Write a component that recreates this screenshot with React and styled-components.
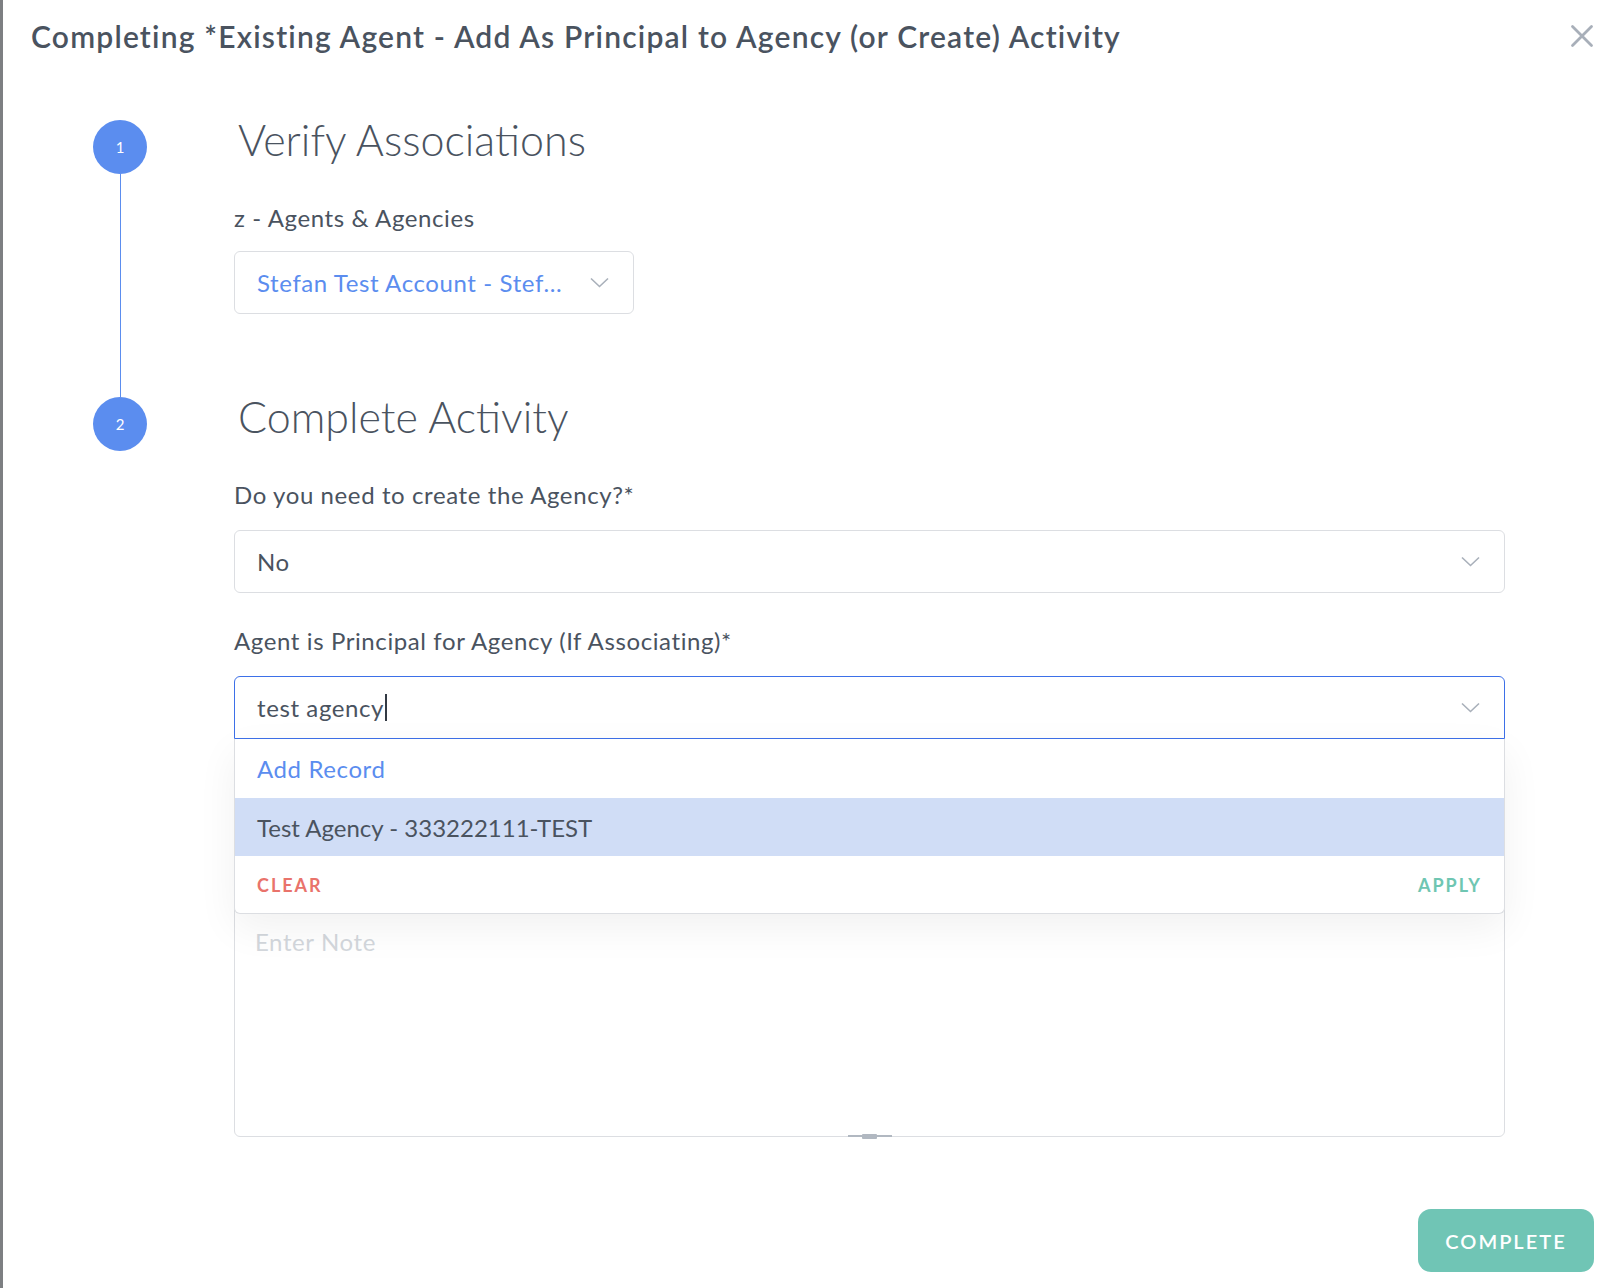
import React from 'react'
import styled, { createGlobalStyle } from 'styled-components';

const GlobalStyle = createGlobalStyle`
  html, body {
    margin: 0;
    padding: 0;
    background: #7d7f82;
  }
  #root {
    min-height: 100vh;
  }
  * {
    box-sizing: border-box;
  }
`;

const Modal = styled.div`
  margin-left: 3px;
  height: 100vh;
  background: #ffffff;
  display: flex;
  flex-direction: column;
  font-family: 'Lato', 'Open Sans', sans-serif;
  color: #4a535f;
`;

const Header = styled.div`
  display: flex;
  justify-content: space-between;
  align-items: center;
  padding: 16px 22px 0 28px;
`;

const Title = styled.h1`
  margin: 0;
  font-size: 30px;
  line-height: 40px;
  font-weight: 600;
  letter-spacing: 1.2px;
  color: #4a535f;
`;

const CloseButton = styled.button`
  border: none;
  background: none;
  padding: 0;
  width: 24px;
  height: 24px;
  display: flex;
  align-items: center;
  justify-content: center;
  cursor: pointer;
`;

const Steps = styled.div`
  margin-top: 64px;
  padding: 0 111px 0 90px;
`;

const Step = styled.div`
  display: grid;
  grid-template-columns: 54px 1fr;
  column-gap: 87px;
  min-height: ${p => p.$height || 'auto'};
`;

const Rail = styled.div`
  display: flex;
  flex-direction: column;
  align-items: center;
`;

const Circle = styled.div`
  width: 54px;
  height: 54px;
  flex-shrink: 0;
  border-radius: 50%;
  background: #5b8def;
  color: #ffffff;
  font-size: 15px;
  display: flex;
  align-items: center;
  justify-content: center;
`;

const RailLine = styled.div`
  flex: 1;
  width: 1px;
  background: #5b8def;
`;

const StepBody = styled.div`
  display: flex;
  flex-direction: column;
`;

const StepTitle = styled.h2`
  margin: -2px 0 2px 4px;
  font-size: 43px;
  line-height: 44px;
  font-weight: 300;
  color: #4a535f;
`;

const Field = styled.div`
  margin-top: ${p => p.$top || 34}px;
  display: flex;
  flex-direction: column;
  position: relative;
`;

const Label = styled.label`
  font-size: 24px;
  line-height: 28px;
  letter-spacing: 0.6px;
  color: #4a535f;
  margin-bottom: ${p => p.$gap || 21}px;
`;

const SelectBox = styled.div`
  width: ${p => p.$width || '100%'};
  height: 63px;
  border: 1px solid ${p => (p.$focused ? '#3d70e8' : '#dcdee2')};
  border-radius: ${p => (p.$focused ? '6px 6px 0 0' : '6px')};
  display: flex;
  align-items: center;
  justify-content: space-between;
  padding: 0 24px 0 22px;
  background: #ffffff;
`;

const SelectValue = styled.span`
  font-size: 24px;
  letter-spacing: 0.6px;
  color: ${p => (p.$link ? '#5b8def' : '#4a535f')};
  white-space: nowrap;
  display: flex;
  align-items: center;
`;

const Caret = styled.span`
  display: inline-block;
  width: 2px;
  height: 27px;
  margin-left: 1px;
  background: #333a44;
`;

const Menu = styled.div`
  position: absolute;
  left: 0;
  right: 0;
  top: 100%;
  z-index: 2;
  background: #ffffff;
  border: 1px solid #dcdee2;
  border-top: none;
  border-radius: 0 0 6px 6px;
  box-shadow: 0 14px 40px rgba(0, 0, 0, 0.06);
`;

const MenuItem = styled.div`
  height: ${p => p.$h}px;
  display: flex;
  align-items: center;
  padding: 0 22px;
  font-size: 24px;
  letter-spacing: ${p => (p.$active ? '0' : '0.6px')};
  color: ${p => (p.$link ? '#5b8def' : '#4a535f')};
  background: ${p => (p.$active ? '#d0ddf6' : 'transparent')};
`;

const MenuFooter = styled.div`
  height: 57px;
  display: flex;
  align-items: center;
  justify-content: space-between;
  padding: 0 22px;
`;

const TextButton = styled.button`
  border: none;
  background: none;
  padding: 0;
  font-family: 'Lato', sans-serif;
  font-size: 18px;
  font-weight: 700;
  letter-spacing: 2px;
  color: ${p => p.$color};
  cursor: pointer;
`;

const NoteWrap = styled.div`
  position: relative;
  margin-top: 160px;
`;

const NoteArea = styled.textarea`
  display: block;
  width: 100%;
  height: 238px;
  border: 1px solid #dcdee2;
  border-radius: 6px;
  padding: 28px 20px;
  resize: none;
  font-family: 'Lato', sans-serif;
  font-size: 24px;
  letter-spacing: 0.6px;
  line-height: 28px;
  color: #4a535f;
  outline: none;

  &::placeholder {
    color: #d3d7dc;
  }
`;

const Grip = styled.div`
  position: absolute;
  left: 50%;
  bottom: -4px;
  transform: translateX(-50%);
  display: flex;
`;

const Footer = styled.div`
  margin-top: auto;
  display: flex;
  justify-content: flex-end;
  padding: 0 22px 16px 0;
`;

const CompleteButton = styled.button`
  width: 176px;
  height: 63px;
  border: none;
  border-radius: 13px;
  background: #70c5b5;
  color: #ffffff;
  font-family: 'Lato', sans-serif;
  font-size: 20px;
  font-weight: 600;
  letter-spacing: 2px;
  cursor: pointer;
`;

const Chevron = () => (
  <svg width="19" height="11" viewBox="0 0 19 11" fill="none">
    <path d="M1 1.5L9.5 9.5L18 1.5" stroke="#a9b0ba" strokeWidth="1.6" />
  </svg>
);

const App = () => {
  return (
    <>
      <GlobalStyle />
      <Modal>
        <Header>
          <Title>Completing *Existing Agent - Add As Principal to Agency (or Create) Activity</Title>
          <CloseButton aria-label="Close">
            <svg width="24" height="24" viewBox="0 0 24 24">
              <path d="M2.5 2.5L21.5 21.5M21.5 2.5L2.5 21.5" stroke="#a8afb9" strokeWidth="2.8" strokeLinecap="round" />
            </svg>
          </CloseButton>
        </Header>

        <Steps>
          <Step $height="277px">
            <Rail>
              <Circle>1</Circle>
              <RailLine />
            </Rail>
            <StepBody>
              <StepTitle>Verify Associations</StepTitle>
              <Field $top={40}>
                <Label $gap={19}>z - Agents &amp; Agencies</Label>
                <SelectBox $width="400px">
                  <SelectValue $link>Stefan Test Account - Stef...</SelectValue>
                  <Chevron />
                </SelectBox>
              </Field>
            </StepBody>
          </Step>

          <Step>
            <Rail>
              <Circle>2</Circle>
            </Rail>
            <StepBody>
              <StepTitle>Complete Activity</StepTitle>
              <Field $top={40}>
                <Label>Do you need to create the Agency?*</Label>
                <SelectBox>
                  <SelectValue>No</SelectValue>
                  <Chevron />
                </SelectBox>
              </Field>
              <Field $top={34}>
                <Label>Agent is Principal for Agency (If Associating)*</Label>
                <SelectBox $focused>
                  <SelectValue>test agency<Caret /></SelectValue>
                  <Chevron />
                </SelectBox>
                <Menu>
                  <MenuItem $h={59} $link>Add Record</MenuItem>
                  <MenuItem $h={58} $active>Test Agency - 333222111-TEST</MenuItem>
                  <MenuFooter>
                    <TextButton $color="#e9736b">CLEAR</TextButton>
                    <TextButton $color="#6fc6b2">APPLY</TextButton>
                  </MenuFooter>
                </Menu>
              </Field>
              <NoteWrap>
                <NoteArea placeholder="Enter Note" />
                <Grip>
                  <svg width="44" height="8" viewBox="0 0 44 8">
                    <rect x="0" y="2" width="44" height="2" fill="#b1b8c1" />
                    <rect x="14" y="1" width="15" height="5" rx="1" fill="#b1b8c1" />
                  </svg>
                </Grip>
              </NoteWrap>
            </StepBody>
          </Step>
        </Steps>

        <Footer>
          <CompleteButton>COMPLETE</CompleteButton>
        </Footer>
      </Modal>
    </>
  )
}

export default App;
